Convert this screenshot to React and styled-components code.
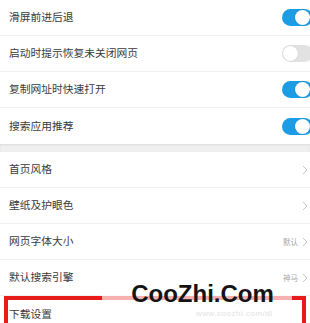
import React from "react";
import styled, { createGlobalStyle } from "styled-components";

const GlobalStyle = createGlobalStyle`
  html, body {
    margin: 0;
    padding: 0;
    background: #ffffff;
    overflow: hidden;
  }
  body {
    font-family: "Noto Sans CJK SC", "Noto Sans", sans-serif;
  }
`;

const Page = styled.div`
  position: relative;
  width: 310px;
  height: 323px;
  overflow: hidden;
  background: #fff;
`;

const Section = styled.div`
  background: #fff;
`;

const Gap = styled.div`
  height: 8px;
  background: #efefef;
  box-shadow: inset 0 1px 2px rgba(0, 0, 0, 0.08);
`;

const Row = styled.div`
  height: 36px;
  display: flex;
  align-items: center;
  justify-content: space-between;
  padding-left: 9px;
  box-sizing: border-box;
  border-bottom: ${(p) => (p.last ? "none" : "1px solid #f0f0f0")};
`;

const Label = styled.span`
  font-size: 10.75px;
  color: #3a3a3a;
  line-height: 1;
`;

const Right = styled.div`
  display: flex;
  align-items: center;
  gap: 4px;
  padding-right: 2px;
`;

const Hint = styled.span`
  font-size: 7.5px;
  color: #a8a8a8;
  line-height: 1;
`;

const Track = styled.div`
  position: relative;
  width: 31px;
  height: 17px;
  border-radius: 9px;
  background: ${(p) => (p.on ? "#1d9ce6" : "#e2e2e2")};
  margin-right: -5px;
  flex-shrink: 0;
`;

const Knob = styled.div`
  position: absolute;
  top: 1px;
  left: ${(p) => (p.on ? "13px" : "1px")};
  width: 15px;
  height: 15px;
  border-radius: 50%;
  background: #fff;
  box-shadow: 0 0 2px rgba(0, 0, 0, 0.12);
`;

const Frame = styled.div`
  position: absolute;
  left: 4px;
  top: 296px;
  width: 302px;
  height: 40px;
  border: 4px solid #e81b1b;
  border-bottom: none;
  box-sizing: border-box;
  pointer-events: none;
`;

const Mark = styled.div`
  position: absolute;
  left: 102px;
  top: 282px;
  width: 190px;
  height: 24px;
  display: flex;
  align-items: center;
  justify-content: center;
  background: rgba(255, 255, 255, 0.65);
  padding-left: 11px;
  box-sizing: border-box;
  font-family: "Liberation Sans", Arial, sans-serif;
  font-weight: bold;
  font-size: 24px;
  color: #141414;
  line-height: 1;
`;

const Faint = styled.div`
  position: absolute;
  left: 196px;
  top: 309px;
  font-family: "Liberation Sans", Arial, sans-serif;
  font-size: 8px;
  color: #e2e2e2;
  letter-spacing: 0.5px;
`;

function Toggle({ on }) {
  return (
    <Track on={on ? 1 : 0}>
      <Knob on={on ? 1 : 0} />
    </Track>
  );
}

function Chevron() {
  return (
    <svg width="6" height="10" viewBox="0 0 6 10">
      <path d="M1 1 L5 5 L1 9" fill="none" stroke="#c8c8c8" strokeWidth="1" />
    </svg>
  );
}

const switches = [
  { label: "滑屏前进后退", on: true },
  { label: "启动时提示恢复未关闭网页", on: false },
  { label: "复制网址时快速打开", on: true },
  { label: "搜索应用推荐", on: true },
];

const links = [
  { label: "首页风格" },
  { label: "壁纸及护眼色" },
  { label: "网页字体大小", hint: "默认" },
  { label: "默认搜索引擎", hint: "神马" },
  { label: "下载设置" },
];

export default function App() {
  return (
    <Page>
      <GlobalStyle />
      <Section>
        {switches.map((s, i) => (
          <Row key={s.label} last={i === switches.length - 1}>
            <Label>{s.label}</Label>
            <Right>
              <Toggle on={s.on} />
            </Right>
          </Row>
        ))}
      </Section>
      <Gap />
      <Section>
        {links.map((l, i) => (
          <Row key={l.label} last={i === links.length - 1}>
            <Label>{l.label}</Label>
            {i < links.length - 1 && (
              <Right>
                {l.hint && <Hint>{l.hint}</Hint>}
                <Chevron />
              </Right>
            )}
          </Row>
        ))}
      </Section>
      <Frame />
      <Mark>CooZhi.Com</Mark>
      <Faint>www.coozhi.com/dl</Faint>
    </Page>
  );
}
